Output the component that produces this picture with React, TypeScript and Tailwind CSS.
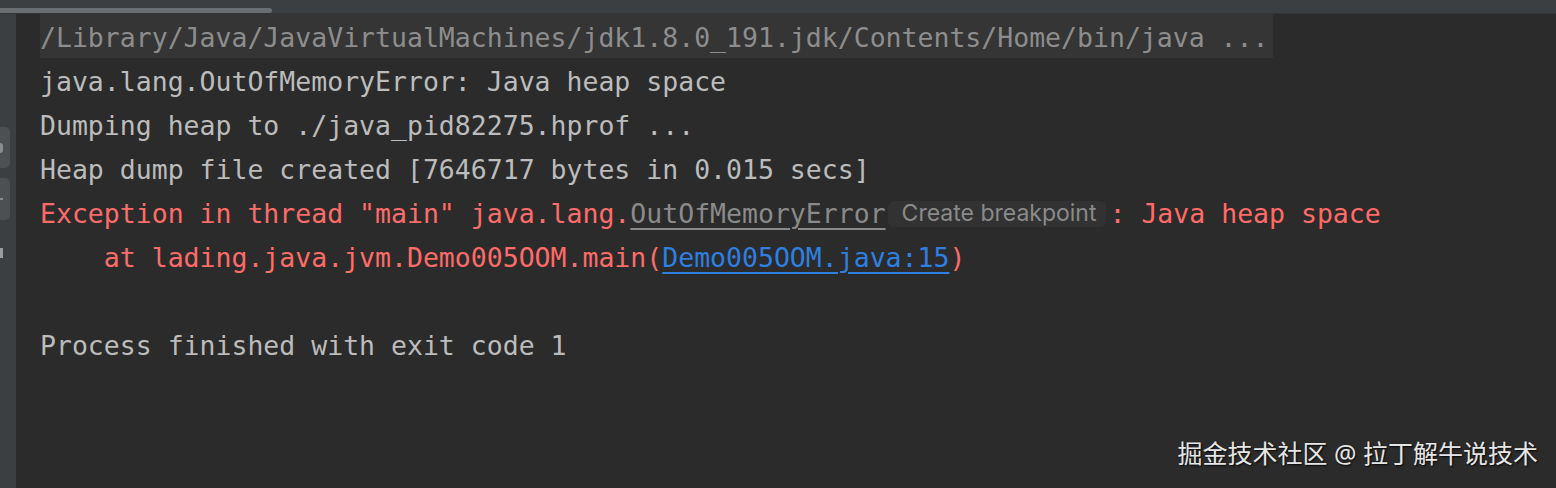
import React from "react";

const mono = { fontFamily: "'DejaVu Sans Mono', 'Liberation Mono', monospace" };

function Line({ children, className = "" }: { children?: React.ReactNode; className?: string }) {
  return (
    <div className={`h-[44px] pt-[3px] flex items-center whitespace-pre text-[26.5px] ${className}`}>{children}</div>
  );
}

export default function App() {
  return (
    <div className="w-[1556px] h-[488px] bg-[#2b2b2b] flex flex-col overflow-hidden relative">
      {/* top bar with scrollbar */}
      <div className="h-[14px] bg-[#3c3f41] flex flex-col shrink-0">
        <div className="h-[8px]" />
        <div className="h-[5px] w-[272px] bg-[#6b6e70] rounded-r-full" />
        <div className="h-[1px] bg-[#323436]" />
      </div>
      <div className="flex flex-1">
        {/* gutter */}
        <div className="w-[16px] bg-[#3c3f41] flex flex-col shrink-0">
          <div className="h-[113px]" />
          <div className="h-[41px] w-[10px] bg-[#4c5052] rounded-r-[5px] flex items-center">
            <div className="w-[3px] h-[10px] bg-[#8a8d8f] rounded-r-full" />
          </div>
          <div className="h-[10px]" />
          <div className="h-[42px] w-[10px] bg-[#4c5052] rounded-r-[5px] flex items-center">
            <div className="w-[3px] h-[2px] bg-[#8a8d8f]" />
          </div>
          <div className="h-[28px]" />
          <div className="w-[3px] h-[10px] bg-[#9a9d9f]" />
        </div>
        <div className="flex-1 pl-[24px]" style={mono}>
          <div className="h-[44px] flex whitespace-pre text-[26.5px]">
            <span className="bg-[#353535] h-[44px] pt-[3px] flex items-center pr-[4px] text-[#8d8d8d]">
              /Library/Java/JavaVirtualMachines/jdk1.8.0_191.jdk/Contents/Home/bin/java ...
            </span>
          </div>
          <Line className="text-[#bcbcbc]">java.lang.OutOfMemoryError: Java heap space</Line>
          <Line className="text-[#bcbcbc]">Dumping heap to ./java_pid82275.hprof ...</Line>
          <Line className="text-[#bcbcbc]">Heap dump file created [7646717 bytes in 0.015 secs]</Line>
          <Line className="text-[#ff6b68]">
            <span>Exception in thread "main" java.lang.</span>
            <span className="text-[#8a8a8a] underline underline-offset-[5px] decoration-[2px]">OutOfMemoryError</span>
            <span
              className="ml-[2px] mr-[4px] pl-[14px] pr-[9px] h-[26px] flex items-center rounded-[6px] bg-[#323232] text-[#8a8a8a] text-[23px]"
              style={{ fontFamily: "'Inter', 'Noto Sans', sans-serif" }}
            >
              Create breakpoint
            </span>
            <span>: Java heap space</span>
          </Line>
          <Line className="text-[#ff6b68]">
            <span>    at lading.java.jvm.Demo005OOM.main(</span>
            <span className="text-[#2f7fe0] underline underline-offset-[5px] decoration-[2px]">Demo005OOM.java:15</span>
            <span>)</span>
          </Line>
          <Line />
          <Line className="text-[#bcbcbc]">Process finished with exit code 1</Line>
        </div>
      </div>
      <div
        className="absolute right-[18px] bottom-[16px] text-[25px] text-[#e6e6e6] [text-shadow:1px_1px_2px_rgba(0,0,0,0.9)]"
        style={{ fontFamily: "'Noto Sans', 'Noto Sans CJK SC', sans-serif" }}
      >
        掘金技术社区 @ 拉丁解牛说技术
      </div>
    </div>
  );
}
